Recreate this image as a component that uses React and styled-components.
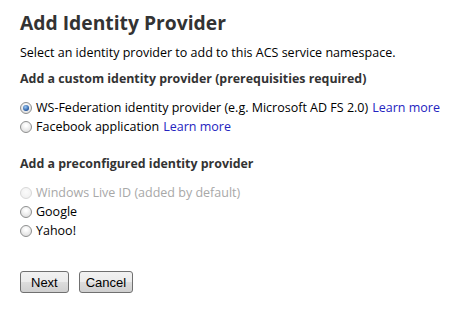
import React from "react";
import styled, { createGlobalStyle } from "styled-components";

const Global = createGlobalStyle`
  html, body { margin: 0; padding: 0; background: #fff; }
  body { font-family: "Open Sans", "Noto Sans", sans-serif; color: #000; }
`;

const Page = styled.div`
  padding: 10px 20px 0 20px;
  width: 467px;
  height: 318px;
  box-sizing: border-box;
`;

const Title = styled.h1`
  margin: 0;
  font-size: 19.3px;
  font-weight: 700;
  color: #333;
  line-height: 26px;
`;

const Intro = styled.p`
  margin: 8px 0 0 0;
  font-size: 12.5px;
  line-height: 18px;
`;

const Section = styled.h2`
  margin: ${(p) => p.$top}px 0 0 0;
  font-size: 12.4px;
  font-weight: 700;
  color: #333;
  line-height: 18px;
`;

const List = styled.div`
  display: flex;
  flex-direction: column;
  margin-top: ${(p) => p.$top}px;
`;

const Row = styled.label`
  display: flex;
  align-items: center;
  gap: 4px;
  height: 19px;
  font-size: 12.5px;
  white-space: nowrap;
  color: ${(p) => (p.$disabled ? "#a8a8a8" : "#000")};
`;

const Radio = styled.span`
  width: 12px;
  height: 12px;
  border-radius: 50%;
  box-sizing: border-box;
  border: 1px solid ${(p) => (p.$disabled ? "#d8d8d8" : "#8e8f8f")};
  background: ${(p) =>
    p.$disabled
      ? "radial-gradient(circle at 50% 40%, #fbfbfb, #ededed)"
      : "radial-gradient(circle at 50% 35%, #ffffff 10%, #d6d6d6)"};
  display: flex;
  align-items: center;
  justify-content: center;
  flex-shrink: 0;
  &::after {
    content: "";
    display: ${(p) => (p.$checked ? "block" : "none")};
    width: 6px;
    height: 6px;
    border-radius: 50%;
    background: radial-gradient(circle at 40% 35%, #9ccaf5, #1a4d98 75%);
  }
`;

const Link = styled.a`
  color: #2424c0;
  text-decoration: none;
  margin-left: 4px;
`;

const Buttons = styled.div`
  display: flex;
  gap: 10px;
  margin-top: 31px;
`;

const Button = styled.button`
  font-family: "Liberation Sans", Arial, sans-serif;
  font-size: 13px;
  height: 22px;
  padding: 0 ${(p) => p.$pad}px;
  border: 1px solid #707070;
  border-radius: 3px;
  background: linear-gradient(#f2f2f2 0%, #ebebeb 50%, #dddddd 51%, #cfcfcf 100%);
  color: #000;
`;

function Option({ checked, disabled, children }) {
  return (
    <Row $disabled={disabled}>
      <Radio $checked={checked} $disabled={disabled} />
      <span>{children}</span>
    </Row>
  );
}

export default function App() {
  return (
    <>
      <Global />
      <Page>
        <Title>Add Identity Provider</Title>
        <Intro>Select an identity provider to add to this ACS service namespace.</Intro>
        <Section $top={8}>Add a custom identity provider (prerequisities required)</Section>
        <List $top={10}>
          <Option checked>
            WS-Federation identity provider (e.g. Microsoft AD FS 2.0)<Link href="#">Learn more</Link>
          </Option>
          <Option>
            Facebook application<Link href="#">Learn more</Link>
          </Option>
        </List>
        <Section $top={19}>Add a preconfigured identity provider</Section>
        <List $top={10}>
          <Option disabled>Windows Live ID (added by default)</Option>
          <Option>Google</Option>
          <Option>Yahoo!</Option>
        </List>
        <Buttons>
          <Button $pad={10}>Next</Button>
          <Button $pad={6}>Cancel</Button>
        </Buttons>
      </Page>
    </>
  );
}
